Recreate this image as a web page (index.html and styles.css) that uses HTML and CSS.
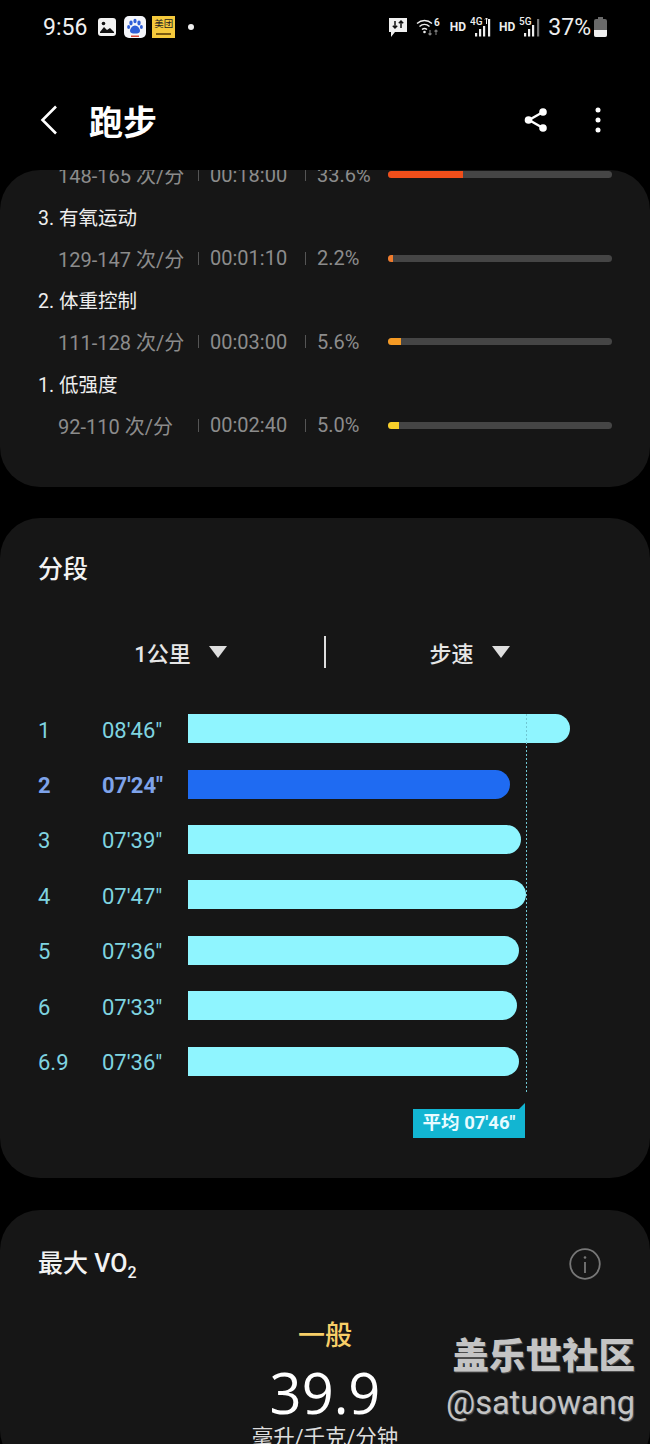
FILE: index.html
```html
<!DOCTYPE html>
<html lang="zh-CN">
<head>
  <meta charset="UTF-8">
  <meta name="viewport" content="width=device-width, initial-scale=1.0">
  <title>跑步</title>
  <link rel="stylesheet" href="styles.css">
</head>
<body>
  <div class="status">
    <div class="status-left">
      <span class="clock">9:56</span>
      <svg class="ic-gallery" width="18" height="18" viewBox="0 0 18 18"><rect width="18" height="18" rx="3" fill="#f2f2f2"/><path d="M2 14l4-5 3 3 3-2 4 4v1H2z" fill="#111"/><circle cx="5.5" cy="5.5" r="1.8" fill="#111"/></svg>
      <svg class="ic-baidu" width="22" height="22" viewBox="0 0 22 22"><rect width="22" height="22" rx="5" fill="#f4f6fb"/><g fill="#2f5fd8"><ellipse cx="7" cy="7" rx="1.7" ry="2.4"/><ellipse cx="11" cy="5" rx="1.6" ry="2.3"/><ellipse cx="15" cy="7" rx="1.7" ry="2.4"/><ellipse cx="4.6" cy="11" rx="1.5" ry="2"/><ellipse cx="17.4" cy="11" rx="1.5" ry="2"/><path d="M11 9.5c-2.5 0-5 3-5 5.5 0 2 2 2.500 5 2.500s5-.5 5-2.500c0-2.500-2.500-5.500-5-5.500z"/></g><rect x="7" y="19.500" width="8" height="1.500" fill="#d8473a"/></svg>
      <span class="meituan">美团</span>
      <span class="status-dot"></span>
    </div>
    <div class="status-right">
      <svg width="20" height="21" viewBox="0 0 20 21"><path d="M1 1h18v14H7l-4 5v-5H1z" fill="#f0f0f0"/><path d="M7 4v7M4.800 8.800L7 11l2.200-2.200M13 11V4M10.800 6.200L13 4l2.200 2.200" stroke="#111" stroke-width="1.500" fill="none"/></svg>
      <svg class="ic-wifi" width="24" height="20" viewBox="0 0 24 20"><path d="M1 6.500c4.500-4 10.500-4 15 0M3.500 9.500c3-2.700 7-2.700 10 0M6 12.500c1.700-1.500 3.300-1.500 5 0" stroke="#eee" stroke-width="1.400" fill="none"/><circle cx="8.500" cy="15" r="1.300" fill="#eee"/><path d="M14 13v5M12.500 16.500l1.500 1.500 1.500-1.500" stroke="#888" stroke-width="1.100" fill="none"/><path d="M20 18v-5M18.500 14.500l1.500-1.500 1.500 1.500" stroke="#777" stroke-width="1.100" fill="none"/><text x="18" y="9" class="wifi-six">6</text></svg>
      <span class="hd hd-first">HD</span>
      <svg width="22" height="20" viewBox="0 0 22 20"><text x="0" y="8" class="net">4G</text><path d="M16.500 7V1M15 2.500L16.500 1 18 2.500" stroke="#eee" stroke-width="1" fill="none"/><g fill="#eee"><rect x="5" y="16" width="2.200" height="3.500"/><rect x="9" y="12" width="2.200" height="7.500"/><rect x="13" y="9" width="2.200" height="10.500"/><rect x="18" y="2" width="2.200" height="17.500"/></g></svg>
      <span class="hd">HD</span>
      <svg width="22" height="20" viewBox="0 0 22 20"><text x="0" y="8" class="net">5G</text><g fill="#eee"><rect x="5" y="16" width="2.200" height="3.500"/><rect x="9" y="12" width="2.200" height="7.500"/><rect x="13" y="8" width="2.200" height="11.500"/></g><rect x="18" y="2" width="2.200" height="17.500" fill="#777"/></svg>
      <span class="battery-pct">37%</span>
      <svg class="ic-battery" width="13" height="20" viewBox="0 0 13 20"><path d="M4 0h5v2h2a2 2 0 0 1 2 2v14a2 2 0 0 1-2 2H2a2 2 0 0 1-2-2V4a2 2 0 0 1 2-2h2z" fill="#6a6a6a"/><path d="M0 13h13v5a2 2 0 0 1-2 2H2a2 2 0 0 1-2-2z" fill="#f0f0f0"/></svg>
    </div>
  </div>

  <div class="appbar">
    <svg class="back" width="18" height="30" viewBox="0 0 18 30"><path d="M16 1.500L2.500 15 16 28.500" stroke="#fff" stroke-width="2.600" fill="none"/></svg>
    <h1>跑步</h1>
    <svg class="share" width="26" height="28" viewBox="0 0 26 28"><path d="M20 6L6 14l14 8" stroke="#fff" stroke-width="2.400" fill="none"/><circle cx="20" cy="6" r="3.800" fill="#fff"/><circle cx="5.500" cy="14" r="3.800" fill="#fff"/><circle cx="20" cy="22" r="3.800" fill="#fff"/></svg>
    <svg class="more" width="6" height="26" viewBox="0 0 6 26"><circle cx="3" cy="3" r="2.500" fill="#fff"/><circle cx="3" cy="13" r="2.500" fill="#fff"/><circle cx="3" cy="23" r="2.500" fill="#fff"/></svg>
  </div>

  <section class="card zones">
    <div class="zone-list">
      <div class="zone-data">
        <span class="z-range">148-165 次/分</span><span class="z-time">00:18:00</span><span class="z-pct">33.6%</span>
        <div class="z-track"><div class="z-fill fill-red" style="width:33.6%"></div></div>
      </div>
      <div class="zone-name">3. 有氧运动</div>
      <div class="zone-data">
        <span class="z-range">129-147 次/分</span><span class="z-time">00:01:10</span><span class="z-pct">2.2%</span>
        <div class="z-track"><div class="z-fill fill-orange" style="width:2.200%"></div></div>
      </div>
      <div class="zone-name">2. 体重控制</div>
      <div class="zone-data">
        <span class="z-range">111-128 次/分</span><span class="z-time">00:03:00</span><span class="z-pct">5.6%</span>
        <div class="z-track"><div class="z-fill fill-amber" style="width:5.600%"></div></div>
      </div>
      <div class="zone-name">1. 低强度</div>
      <div class="zone-data">
        <span class="z-range">92-110 次/分</span><span class="z-time">00:02:40</span><span class="z-pct">5.0%</span>
        <div class="z-track"><div class="z-fill fill-yellow" style="width:5%"></div></div>
      </div>
    </div>
  </section>

  <section class="card laps">
    <h2>分段</h2>
    <div class="pickers">
      <div class="picker"><span>1公里</span><i class="tri"></i></div>
      <div class="picker"><span>步速</span><i class="tri"></i></div>
    </div>
    <div class="chart">
      <div class="avg-line"></div>
      <div class="lap"><span class="l-no">1</span><span class="l-time">08'46"</span><div class="l-bar" style="width:382px"></div></div>
      <div class="lap best"><span class="l-no">2</span><span class="l-time">07'24"</span><div class="l-bar" style="width:322px"></div></div>
      <div class="lap"><span class="l-no">3</span><span class="l-time">07'39"</span><div class="l-bar" style="width:333px"></div></div>
      <div class="lap"><span class="l-no">4</span><span class="l-time">07'47"</span><div class="l-bar" style="width:338px"></div></div>
      <div class="lap"><span class="l-no">5</span><span class="l-time">07'36"</span><div class="l-bar" style="width:331px"></div></div>
      <div class="lap"><span class="l-no">6</span><span class="l-time">07'33"</span><div class="l-bar" style="width:329px"></div></div>
      <div class="lap"><span class="l-no">6.9</span><span class="l-time">07'36"</span><div class="l-bar" style="width:331px"></div></div>
      <div class="avg-tag">平均 07'46"</div>
    </div>
  </section>

  <section class="card vo2">
    <div class="vo2-head">
      <h2>最大 VO<sub>2</sub></h2>
      <svg class="info" width="32" height="32" viewBox="0 0 32 32"><circle cx="16" cy="16" r="14.800" stroke="#777" stroke-width="1.800" fill="none"/><circle cx="16" cy="9.500" r="1.300" fill="#777"/><path d="M16 14v11" stroke="#777" stroke-width="1.800"/></svg>
    </div>
    <div class="vo2-level">一般</div>
    <div class="vo2-value">39.9</div>
    <div class="vo2-unit">毫升/千克/分钟</div>
  </section>

  <div class="watermark">
    <div class="wm-title">盖乐世社区</div>
    <div class="wm-user">@satuowang</div>
  </div>
</body>
</html>
```

FILE: styles.css
```css
* {
  box-sizing: border-box;
}
html, body {
  margin: 0;
  padding: 0;
}
body {
  position: relative;
  width: 650px;
  height: 1444px;
  overflow: hidden;
  background: #000;
  color: #f2f2f2;
  font-family: Roboto, "Noto Sans CJK SC", sans-serif;
}

/* status bar */
.status {
  display: flex;
  justify-content: space-between;
  align-items: center;
  height: 56px;
  padding: 0 43px 2px 43px;
}
.status-left, .status-right {
  display: flex;
  align-items: center;
}
.clock {
  font-size: 23px;
  color: #f0f0f0;
  margin-right: 11px;
}
.ic-baidu {
  margin-left: 8px;
}
.meituan {
  display: block;
  width: 23px;
  height: 22px;
  margin-left: 6px;
  padding-top: 1px;
  background: linear-gradient(#7a5a10, #7a5a10) center 17px / 15px 2px no-repeat #f5c93c;
  color: #222;
  font-size: 9.500px;
  line-height: 14px;
  text-align: center;
}
.status-dot {
  width: 6px;
  height: 6px;
  margin-left: 13px;
  border-radius: 50%;
  background: #eee;
}
.ic-wifi {
  margin-left: 8px;
}
.wifi-six {
  font: bold 10px Roboto, sans-serif;
  fill: #eee;
}
.hd {
  font-size: 12px;
  font-weight: 700;
  color: #eee;
  margin: 0 4px 0 7px;
}
.hd-first {
  margin-left: 10px;
}
.net {
  font: 500 10px Roboto, sans-serif;
  fill: #eee;
}
.battery-pct {
  font-size: 23px;
  color: #eee;
  margin: 0 3px 0 7px;
}

/* app bar */
.appbar {
  display: flex;
  align-items: center;
  height: 114px;
  padding: 14px 49px 0 40px;
}
.back {
  flex: none;
}
.appbar h1 {
  flex: 1;
  margin: 0 0 0 31px;
  font-size: 34px;
  font-weight: 700;
  color: #fff;
}
.share {
  margin-right: 46px;
}

/* cards */
.card {
  background: #161616;
  border-radius: 40px;
  overflow: hidden;
}
.card h2 {
  margin: 0;
  font-size: 25px;
  line-height: 34px;
  font-weight: 500;
  color: #f2f2f2;
}

/* heart rate zones, scrolled under the app bar */
.zones {
  height: 317px;
  margin-bottom: 31px;
}
.zone-list {
  margin-top: -16px;
  padding: 0 38px;
}
.zone-name {
  height: 42px;
  line-height: 46px;
  font-size: 19.500px;
  color: #eee;
}
.zone-data {
  display: flex;
  align-items: center;
  height: 41.500px;
  padding-left: 20px;
  font-size: 20px;
  color: #8c8c8c;
}
.z-range {
  width: 140px;
  white-space: nowrap;
}
.z-time {
  width: 107px;
  padding-left: 12px;
  background: linear-gradient(#555, #555) left center / 1px 13px no-repeat;
}
.z-pct {
  width: 83px;
  padding-left: 12px;
  background: linear-gradient(#555, #555) left center / 1px 13px no-repeat;
}
.z-track {
  flex: 1;
  height: 7px;
  border-radius: 4px;
  background: #454545;
  overflow: hidden;
}
.z-fill {
  height: 100%;
}
.fill-red { background: #f04e1a; }
.fill-orange { background: #f07b2c; }
.fill-amber { background: #f59a24; }
.fill-yellow { background: #f8cf2a; }

/* laps */
.laps {
  height: 660px;
  margin-bottom: 32px;
  padding: 35px 38px 0;
}
.pickers {
  display: grid;
  grid-template-columns: 1fr 1fr;
  margin: 49px -38px 0;
  padding: 0 36px;
  height: 32px;
  background: linear-gradient(#ddd, #ddd) center / 2px 100% no-repeat;
}
.picker {
  display: flex;
  align-items: center;
  justify-content: center;
  gap: 18px;
  font-size: 22px;
  font-weight: 500;
  color: #e6e6e6;
}
.tri {
  width: 0;
  height: 0;
  border-left: 9px solid transparent;
  border-right: 9px solid transparent;
  border-top: 12px solid #dedede;
}
.chart {
  position: relative;
  margin-top: 33px;
}
.avg-line {
  position: absolute;
  left: 488px;
  top: 13px;
  width: 1px;
  height: 378px;
  background: repeating-linear-gradient(#6fc6d2 0 2px, transparent 2px 4px);
}
.lap {
  display: flex;
  align-items: center;
  height: 55.400px;
  font-size: 22px;
  color: #7fd4e0;
}
.l-no {
  width: 64px;
  padding-top: 3px;
}
.l-time {
  width: 86px;
  padding-top: 3px;
}
.l-bar {
  height: 29px;
  border-radius: 0 14.500px 14.500px 0;
  background: #8ff5ff;
}
.best {
  color: #7ea3ea;
  font-weight: 700;
}
.best .l-bar {
  background: #1f6bf2;
}
.avg-tag {
  position: absolute;
  left: 375px;
  top: 408px;
  width: 112px;
  height: 29px;
  line-height: 29px;
  text-align: center;
  background: #12b5d2;
  color: #e8fbff;
  font-size: 18.500px;
  font-weight: 700;
  white-space: nowrap;
}
.avg-tag::after {
  content: "";
  position: absolute;
  right: 0;
  top: -6px;
  border-left: 6px solid transparent;
  border-bottom: 6px solid #12b5d2;
}

/* VO2 max */
.vo2 {
  height: 260px;
  padding-top: 37px;
}
.vo2-head {
  display: flex;
  justify-content: space-between;
  align-items: center;
  padding: 0 49px 0 38px;
}
.vo2-head sub {
  font-size: 16px;
  line-height: 0;
}
.vo2-level {
  margin-top: 38px;
  text-align: center;
  font-size: 27px;
  line-height: 34px;
  font-weight: 500;
  color: #f8cf68;
}
.vo2-value {
  margin-top: 8px;
  text-align: center;
  font-family: "Open Sans", Roboto, sans-serif;
  font-size: 56px;
  line-height: 62px;
  color: #fff;
}
.vo2-unit {
  text-align: center;
  font-size: 21.500px;
  line-height: 30px;
  color: #ddd;
}

/* community watermark over the screenshot */
.watermark {
  position: absolute;
  right: 15px;
  top: 1336px;
  text-align: right;
  color: #c4c4c4;
  text-shadow: 1px 1px 1px #555;
}
.wm-title {
  font-size: 36.500px;
  line-height: 42px;
  font-weight: 900;
}
.wm-user {
  margin-top: 5px;
  font-size: 32.500px;
  line-height: 40px;
}
```
